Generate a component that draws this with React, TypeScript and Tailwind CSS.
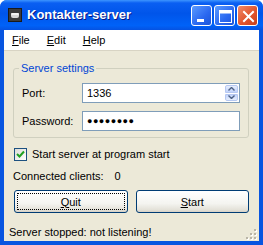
const AppIcon = () => (
  <svg width="14" height="14" viewBox="0 0 14 14">
    <rect x="0.5" y="0.5" width="13" height="13" fill="#3b3b3b" stroke="#1a1a1a" />
    <rect x="3" y="5" width="8" height="5" rx="2" fill="#d8d8d8" />
    <rect x="3" y="5" width="8" height="2" rx="1" fill="#f4f4f4" />
  </svg>
);

const MinIcon = () => (
  <svg width="21" height="21" viewBox="0 0 21 21">
    <rect x="5" y="13" width="7" height="3" fill="#fff" />
  </svg>
);

const MaxIcon = () => (
  <svg width="21" height="21" viewBox="0 0 21 21">
    <rect x="5" y="4.5" width="11.5" height="3" fill="#fff" />
    <rect x="4.5" y="4.5" width="12" height="12" fill="none" stroke="#fff" strokeWidth="1" />
  </svg>
);

const CloseIcon = () => (
  <svg width="21" height="21" viewBox="0 0 21 21">
    <path d="M6 6 L15 15 M15 6 L6 15" stroke="#fff" strokeWidth="2" strokeLinecap="square" />
  </svg>
);

const SpinArrows = () => (
  <div className="my-[1px] mr-[1px] flex w-[13px] flex-col gap-[1px]">
    <div className="flex h-[8px] items-center justify-center rounded-t-[2px] border border-[#b6c8f2] bg-[linear-gradient(to_bottom,#e6eefc,#c1d3fb)]">
      <svg width="7" height="4" viewBox="0 0 7 4">
        <path d="M0.5 3.5 L3.5 0.5 L6.5 3.5" fill="none" stroke="#4d6185" strokeWidth="1.4" />
      </svg>
    </div>
    <div className="flex h-[8px] items-center justify-center rounded-b-[2px] border border-[#b6c8f2] bg-[linear-gradient(to_bottom,#c1d3fb,#e6eefc)]">
      <svg width="7" height="4" viewBox="0 0 7 4">
        <path d="M0.5 0.5 L3.5 3.5 L6.5 0.5" fill="none" stroke="#4d6185" strokeWidth="1.4" />
      </svg>
    </div>
  </div>
);

const Grip = () => (
  <svg width="12" height="12" viewBox="0 0 12 12">
    {[
      [9, 1],
      [5, 5],
      [9, 5],
      [1, 9],
      [5, 9],
      [9, 9],
    ].map(([x, y]) => (
      <g key={`${x}-${y}`}>
        <rect x={x + 1} y={y + 1} width="2" height="2" fill="#fff" />
        <rect x={x} y={y} width="2" height="2" fill="#b9b5a8" />
      </g>
    ))}
  </svg>
);

function XpButton({ children, focused = false }: { children: React.ReactNode; focused?: boolean }) {
  return (
    <button className="flex h-[23px] items-center justify-center rounded-[3px] border border-[#003c74] bg-[linear-gradient(to_bottom,#ffffff_0%,#f4f4f0_60%,#e3e1d8_90%,#d6d0c5_100%)] p-[2px]">
      <span
        className={`flex h-full w-full items-center justify-center ${
          focused ? 'border border-dotted border-black' : 'border border-transparent'
        }`}
      >
        {children}
      </span>
    </button>
  );
}

export default function App() {
  return (
    <div className="h-[245px] w-[263px] bg-white font-['Liberation_Sans',Arial,sans-serif] text-[11px] leading-[14px] text-black">
      <div className="flex h-full flex-col overflow-hidden rounded-t-[7px] bg-[#0855e0]">
        {/* Title bar */}
        <div className="flex h-[30px] items-center bg-[linear-gradient(to_bottom,#3d95ff_0%,#0a5ff2_10%,#0055ea_45%,#0062f8_85%,#0552e2_100%)] pl-[8px] pr-[5px]">
          <AppIcon />
          <span className="ml-[5px] flex-1 text-[13px] font-bold text-white [text-shadow:1px_1px_#0a1883]">
            Kontakter-server
          </span>
          <div className="flex gap-[2px]">
            <div className="h-[21px] w-[21px] rounded-[3px] border border-white bg-[linear-gradient(135deg,#5b9bff,#2a68f0_60%,#1c55d8)]">
              <MinIcon />
            </div>
            <div className="h-[21px] w-[21px] rounded-[3px] border border-white bg-[linear-gradient(135deg,#5b9bff,#2a68f0_60%,#1c55d8)]">
              <MaxIcon />
            </div>
            <div className="h-[21px] w-[21px] rounded-[3px] border border-white bg-[linear-gradient(135deg,#f08b6a,#e1552e_55%,#c8401c)]">
              <CloseIcon />
            </div>
          </div>
        </div>

        {/* Client area */}
        <div className="mx-[4px] mb-[4px] flex flex-1 flex-col bg-[#ece9d8]">
          {/* Menu bar */}
          <div className="flex h-[21px] items-center gap-[17px] border-b border-[#d8d4c4] bg-white pl-[8px]">
            <span><span className="underline">F</span>ile</span>
            <span><span className="underline">E</span>dit</span>
            <span><span className="underline">H</span>elp</span>
          </div>

          <div className="flex flex-col pl-[9px] pr-[10px]">
            <fieldset className="mt-[10px] rounded-[3px] border border-[#d0d0bf]">
              <legend className="ml-[5px] px-[2px] text-[#0046d5]">Server settings</legend>
              <div className="grid grid-cols-[60px_1fr] items-center gap-y-[8px] pb-[6px] pl-[8px] pr-[8px] pt-[8px]">
                <span>Port:</span>
                <div className="flex h-[20px] items-stretch border border-[#7f9db9] bg-white">
                  <span className="flex flex-1 items-center pl-[4px]">1336</span>
                  <SpinArrows />
                </div>
                <span>Password:</span>
                <div className="flex h-[20px] items-center border border-[#7f9db9] bg-white pl-[4px]">
                  <span className="text-[9px] tracking-[0.5px]">●●●●●●●●</span>
                </div>
              </div>
            </fieldset>

            <label className="ml-[1px] mt-[9px] flex items-center gap-[5px]">
              <span className="flex h-[13px] w-[13px] items-center justify-center border border-[#1c5180] bg-[linear-gradient(135deg,#dcdcd7,#ffffff)]">
                <svg width="9" height="9" viewBox="0 0 9 9">
                  <path d="M1 4 L3.5 6.5 L8 1.5" fill="none" stroke="#21a121" strokeWidth="2" />
                </svg>
              </span>
              <span>Start server at program start</span>
            </label>

            <div className="mt-[8px] flex gap-[11px]">
              <span>Connected clients:</span>
              <span>0</span>
            </div>

            <div className="ml-[1px] mt-[7px] grid grid-cols-2 gap-[8px]">
              <XpButton focused>
                <span><span className="underline">Q</span>uit</span>
              </XpButton>
              <XpButton>
                <span><span className="underline">S</span>tart</span>
              </XpButton>
            </div>
          </div>

          {/* Status bar */}
          <div className="mt-auto flex h-[20px] items-center justify-between pl-[5px] pr-[2px]">
            <span className="pt-[2px]">Server stopped: not listening!</span>
            <div className="self-end pb-[1px]">
              <Grip />
            </div>
          </div>
        </div>
      </div>
    </div>
  );
}
